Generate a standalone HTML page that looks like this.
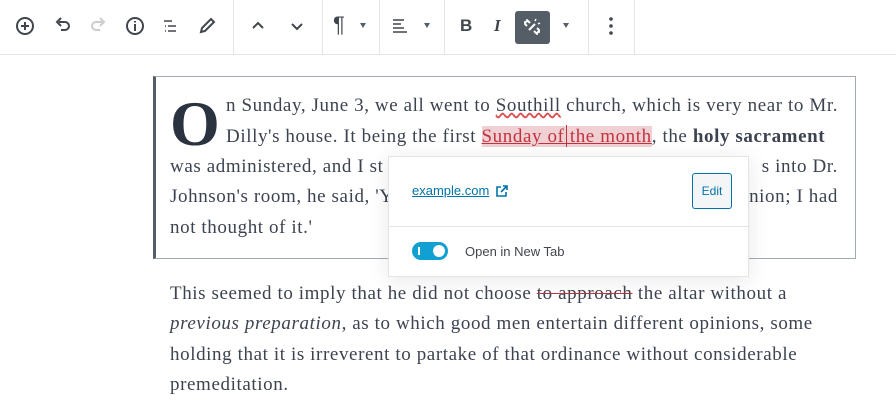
<!DOCTYPE html>
<html><head><meta charset="utf-8"><style>
body{margin:0;width:896px;height:411px;background:#fff;position:relative;overflow:hidden;font-family:"Liberation Serif",serif;color:#3c4350}
.tb{position:absolute;left:0;top:0;width:896px;height:54px;border-bottom:1px solid #e2e4e7}
.sep{position:absolute;top:0;width:1px;height:54px;background:#e2e4e7}
.ic{position:absolute;top:14px}
.ln{position:absolute;left:170px;font-size:19px;letter-spacing:0.6px;white-space:nowrap;line-height:30px}
.rt{left:auto;right:58px}
.arrow{position:absolute;top:23px;width:0;height:0;border-left:3px solid transparent;border-right:3px solid transparent;border-top:5px solid #555d66}
</style></head><body>
<div class="tb">
<svg class="ic" style="left:13px" width="24" height="24" viewBox="0 0 24 24"><circle cx="12" cy="12" r="8" fill="none" stroke="#40464d" stroke-width="2"/><path d="M12 8v8M8 12h8" stroke="#40464d" stroke-width="2"/></svg>
<svg class="ic" style="left:51px" width="24" height="24" viewBox="0 0 24 24"><path d="M8 8h6a4 4 0 010 8H10" fill="none" stroke="#40464d" stroke-width="2"/><path d="M10 4L6 8l4 4" fill="none" stroke="#40464d" stroke-width="2"/></svg>
<svg class="ic" style="left:86px" width="24" height="24" viewBox="0 0 24 24"><path d="M16 8h-6a4 4 0 000 8h4" fill="none" stroke="#ccc" stroke-width="2"/><path d="M14 4l4 4-4 4" fill="none" stroke="#ccc" stroke-width="2"/></svg>
<svg class="ic" style="left:123px" width="24" height="24" viewBox="0 0 24 24"><circle cx="12" cy="12" r="8" fill="none" stroke="#40464d" stroke-width="2"/><path d="M12 10v7M12 7v1.5" stroke="#40464d" stroke-width="2"/></svg>
<svg class="ic" style="left:159px" width="24" height="24" viewBox="0 0 24 24"><path d="M5 7h8M9 12h8M9 17h8M6 12h1M6 17h1" stroke="#40464d" stroke-width="1.6"/></svg>
<svg class="ic" style="left:195px" width="24" height="24" viewBox="0 0 24 24"><path d="M6 18l1-4 9-9 3 3-9 9z" fill="none" stroke="#40464d" stroke-width="2"/></svg>
<div class="sep" style="left:233px"></div>
<svg class="ic" style="left:246px" width="24" height="24" viewBox="0 0 24 24"><path d="M7 14l5-5 5 5" fill="none" stroke="#40464d" stroke-width="2"/></svg>
<svg class="ic" style="left:285px" width="24" height="24" viewBox="0 0 24 24"><path d="M7 10l5 5 5-5" fill="none" stroke="#40464d" stroke-width="2"/></svg>
<div class="sep" style="left:322px"></div>
<div style="position:absolute;left:333px;top:12px;font:22px 'Liberation Sans',sans-serif;color:#40464d">¶</div>
<div class="arrow" style="left:360px"></div>
<div class="sep" style="left:379px"></div>
<svg class="ic" style="left:388px" width="24" height="24" viewBox="0 0 24 24"><path d="M5 6h11M5 10h8M5 14h11M5 18h14" stroke="#40464d" stroke-width="1.6"/></svg>
<div class="arrow" style="left:424px"></div>
<div class="sep" style="left:444px"></div>
<div style="position:absolute;left:460px;top:16px;font:bold 17px 'Liberation Sans',sans-serif;color:#40464d">B</div>
<div style="position:absolute;left:494px;top:16px;font:italic bold 17px 'Liberation Serif',serif;color:#40464d">I</div>
<div style="position:absolute;left:515px;top:11px;width:35px;height:33px;background:#555d66;border-radius:3px"></div>
<svg style="position:absolute;left:520px;top:15px" width="24" height="24" viewBox="0 0 24 24"><path d="M10 8l-2-2a3 3 0 00-3 3l2 2M14 16l2 2a3 3 0 003-3l-2-2M9 15l6-6" fill="none" stroke="#fff" stroke-width="2"/><path d="M7 4v3M4 7h3M17 20v-3M20 17h-3M15 6l1-2M18 9l2-1" stroke="#fff" stroke-width="1.5"/></svg>
<div class="arrow" style="left:563px"></div>
<div class="sep" style="left:588px"></div>
<svg class="ic" style="left:599px" width="24" height="24" viewBox="0 0 24 24"><circle cx="12" cy="5" r="1.8" fill="#40464d"/><circle cx="12" cy="12" r="1.8" fill="#40464d"/><circle cx="12" cy="19" r="1.8" fill="#40464d"/></svg>
<div class="sep" style="left:634px"></div>
</div>

<div style="position:absolute;left:153px;top:76px;width:699px;height:181px;border:1px solid #a2aab2;border-left:3px solid #555d66"></div>
<div style="position:absolute;left:170px;top:84px;font-size:64px;font-weight:bold;color:#2b3340;line-height:80px">O</div>
<div class="ln" style="left:226px;top:91px">n Sunday, June 3, we all went to <span style="text-decoration:underline wavy #d94f4f">Southill</span> church, which is very near to Mr.</div>
<div class="ln" style="left:226px;top:122px">Dilly's house. It being the first <span style="background:#f0d0d3;color:#c0343f;text-decoration:underline">Sunday of the month</span>, the <b>holy sacrament</b></div>
<div class="ln" style="top:152px">was administered, and I st</div>
<div class="ln rt" style="top:152px">s into Dr.</div>
<div class="ln" style="top:182px">Johnson's room, he said, 'Y</div>
<div class="ln rt" style="top:182px">inion; I had</div>
<div class="ln" style="top:213px">not thought of it.'</div>
<div style="position:absolute;left:566px;top:125px;width:1px;height:22px;background:#c0343f"></div>

<div style="position:absolute;left:388px;top:156px;width:359px;height:119px;background:#fff;border:1px solid #e2e4e7;box-shadow:0 3px 20px rgba(25,30,35,.1)">
<div style="position:absolute;left:0;top:69px;width:359px;height:1px;background:#e2e4e7"></div>
<div style="position:absolute;left:23px;top:26px;font:13px 'Liberation Sans',sans-serif;color:#0073aa;text-decoration:underline">example.com</div>
<svg style="position:absolute;left:106px;top:27px" width="14" height="14" viewBox="0 0 14 14"><path d="M6 3H2v9h9V8M8 2h4v4M12 2L6 8" fill="none" stroke="#0073aa" stroke-width="1.6"/></svg>
<div style="position:absolute;left:303px;top:16px;width:38px;height:34px;border:1px solid #0073aa;border-radius:3px;background:#f3f5f6;font:12px 'Liberation Sans',sans-serif;color:#0073aa;text-align:center;line-height:34px">Edit</div>
<div style="position:absolute;left:23px;top:85px;width:36px;height:18px;border-radius:9px;background:#11a0d2"></div>
<div style="position:absolute;left:29px;top:90px;width:2px;height:8px;background:#fff"></div>
<div style="position:absolute;left:44px;top:88px;width:12px;height:12px;border-radius:6px;background:#fff"></div>
<div style="position:absolute;left:76px;top:87px;font:13px 'Liberation Sans',sans-serif;color:#40464d">Open in New Tab</div>
</div>

<div class="ln" style="top:279px">This seemed to imply that he did not choose <s style="text-decoration-color:#c0343f">to approach</s> the altar without a</div>
<div class="ln" style="top:309px"><i>previous preparation</i>, as to which good men entertain different opinions, some</div>
<div class="ln" style="top:340px">holding that it is irreverent to partake of that ordinance without considerable</div>
<div class="ln" style="top:370px">premeditation.</div>
</body></html>
